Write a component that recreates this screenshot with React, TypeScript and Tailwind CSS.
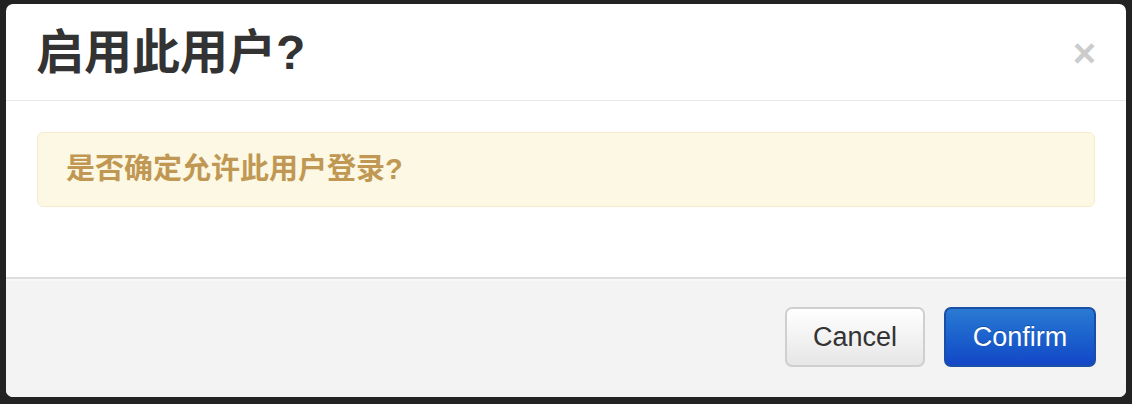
import React from "react";

export default function App() {
  return (
    <div className="w-[1132px] h-[404px] bg-[#222222] pt-[4px] px-[6px] overflow-hidden" style={{ fontFamily: '"Liberation Sans", "Noto Sans CJK SC", sans-serif' }}>
      <div className="w-[1120px] h-[393px] bg-white rounded-[7px] flex flex-col overflow-hidden">
        <div className="h-[97px] flex items-center justify-between pl-[30px] pr-[30px] border-b border-[#e9e9e9]">
          <h3 className="text-[48px] leading-none font-bold text-[#333333] pt-[2px]">启用此用户?</h3>
          <span className="text-[40px] leading-none font-bold text-[#cccccc] mt-[2px]">×</span>
        </div>
        <div className="flex-1 px-[31px] pt-[31px]">
          <div className="h-[75px] bg-[#fcf8e3] border border-[#f6eccd] rounded-[6px] flex items-center pl-[28px]">
            <p className="text-[29px] leading-none font-bold text-[#c09853]">是否确定允许此用户登录?</p>
          </div>
        </div>
        <div className="h-[120px] bg-[#f3f3f3] border-t-2 border-[#dddddd] shadow-[inset_0_2px_0_#f8f8f8] flex items-start justify-end gap-[19px] pr-[30px] pt-[28px]">
          <button className="w-[140px] h-[60px] rounded-[7px] border-2 border-[#cfcfcf] bg-gradient-to-b from-white to-[#e6e6e6] text-[27px] text-[#333333] shadow-[inset_0_2px_0_rgba(255,255,255,0.3)]">
            Cancel
          </button>
          <button className="w-[152px] h-[60px] rounded-[7px] border-2 border-[#1a4fa8] bg-gradient-to-b from-[#2a7ad3] to-[#1446c6] text-[27px] text-white [text-shadow:0_-1px_0_rgba(0,0,0,0.25)]">
            Confirm
          </button>
        </div>
      </div>
    </div>
  );
}
